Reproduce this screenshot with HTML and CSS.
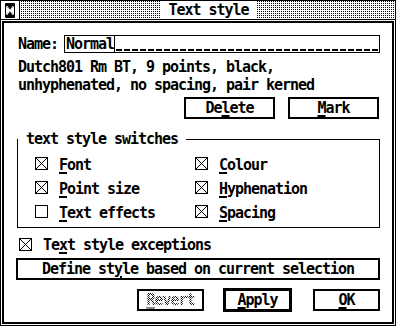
FILE: index.html
```html
<!DOCTYPE html>
<html lang="en">
<head>
  <meta charset="UTF-8">
  <title>Text style</title>
  <link rel="stylesheet" href="styles.css">
</head>
<body>
  <div class="window">
    <div class="titlebar">
      <div class="closer">
        <svg width="10" height="15" viewBox="0 0 10 15">
          <path d="M0.5 0.5h9v14h-9z" fill="none" stroke="#000"/>
          <path d="M1 1h8v2L5 7.5 1 3z M1 14h8v-2L5 7.5 1 12z" fill="#000"/>
          <path d="M2 3l6 9M8 3l-6 9" stroke="#fff" stroke-width="1"/>
        </svg>
      </div>
      <div class="mover"><span class="title">Text style</span></div>
    </div>

    <div class="dialog">
      <div class="name-row">
        <span class="label">Name:</span>
        <div class="field"><span class="typed">Normal</span><span class="blanks"></span></div>
      </div>

      <div class="summary">
        <div class="line">Dutch801 Rm BT, 9 points, black,</div>
        <div class="line">unhyphenated, no spacing, pair kerned</div>
      </div>

      <div class="actions top">
        <button class="btn wide">De<u>l</u>ete</button>
        <button class="btn wide"><u>M</u>ark</button>
      </div>

      <div class="group">
        <span class="legend">text style switches</span>
        <div class="switches">
          <div class="switch"><span class="check on"></span><u>F</u>ont</div>
          <div class="switch"><span class="check on"></span><u>C</u>olour</div>
          <div class="switch"><span class="check on"></span><u>P</u>oint size</div>
          <div class="switch"><span class="check on"></span><u>H</u>yphenation</div>
          <div class="switch"><span class="check"></span><u>T</u>ext effects</div>
          <div class="switch"><span class="check on"></span><u>S</u>pacing</div>
        </div>
      </div>

      <div class="switch exceptions"><span class="check on"></span>Te<u>x</u>t style exceptions</div>

      <button class="btn define">Define st<u>y</u>le based on current selection</button>

      <div class="actions bottom">
        <button class="btn small disabled"><u>R</u>evert</button>
        <button class="btn small default"><u>A</u>pply</button>
        <button class="btn small"><u>O</u>K</button>
      </div>
    </div>
  </div>
</body>
</html>
```

FILE: styles.css
```css
body {
  margin: 0;
  padding: 0;
  background: #fff;
  color: #000;
  font-family: "DejaVu Sans Mono", "Liberation Mono", monospace;
  font-weight: bold;
  font-size: 15px;
  letter-spacing: -1.03px;
  line-height: 16px;
}

.window {
  width: 396px;
  height: 326px;
  box-sizing: border-box;
  border: 1px solid #000;
}

/* title bar: close box + dotted mover */
.titlebar {
  display: flex;
  height: 18px;
  border-bottom: 1px solid #000;
}
.closer {
  width: 18px;
  border-right: 1px solid #000;
  display: flex;
  justify-content: center;
  align-items: center;
}
.mover {
  flex: 1;
  display: flex;
  justify-content: center;
  align-items: center;
  padding-left: 2px;
  background: conic-gradient(#000 25%, #fff 0) 0 0 / 2px 2px;
}
.title {
  background: #fff;
  padding: 0 8px;
  line-height: 18px;
}

.dialog {
  margin: 1px;
  height: 303px;
  box-sizing: border-box;
  border: 2px solid #000;
  padding: 12px 12px 0 12px;
  display: flex;
  flex-direction: column;
}

.name-row {
  display: flex;
  align-items: center;
  height: 18px;
  padding-left: 2px;
}
.name-row .label {
  width: 46px;
}
.field {
  flex: 1;
  display: flex;
  height: 18px;
  box-sizing: border-box;
  border: 1px solid #000;
  padding-left: 1px;
}
.field .typed {
  border-right: 1px solid #000;
}
.field .blanks {
  flex: 1;
  background: repeating-linear-gradient(90deg, transparent 0 1px, #000 1px 7px, transparent 7px 8px) 0 13px / 100% 2px no-repeat;
}

.summary {
  margin-top: 6px;
  padding-left: 2px;
  line-height: 17.5px;
}

u {
  text-decoration-thickness: 2px;
  text-underline-offset: 2px;
}

.actions {
  display: flex;
  justify-content: flex-end;
}
.actions.top {
  margin-top: 3px;
  gap: 13px;
  padding-right: 1px;
}
.actions.bottom {
  margin-top: 9px;
}

.btn {
  font: inherit;
  letter-spacing: inherit;
  color: #000;
  background: #fff;
  height: 22px;
  box-sizing: border-box;
  border: 2px solid #000;
  padding: 0;
  display: flex;
  justify-content: center;
  align-items: center;
}
.btn.wide {
  width: 91px;
}
.btn.small {
  width: 67px;
}
.btn.small + .btn.small {
  margin-left: 20px;
}
.btn.default {
  box-shadow: 0 0 0 1px #000;
}
.btn.default + .btn.small {
  margin-left: 22px;
}
.btn.disabled {
  color: transparent;
  background: conic-gradient(#000 25%, transparent 0 50%, #000 0 75%, transparent 0) 0 0 / 2px 2px;
  -webkit-background-clip: text;
  background-clip: text;
}
.btn.disabled u {
  text-decoration-color: #888;
}
.btn.define {
  margin-top: 5px;
  width: 100%;
}

.group {
  position: relative;
  margin: 20px 0 0 1px;
  border: 1px solid #000;
  padding: 17px 0 6px 17px;
}
.legend {
  position: absolute;
  top: -9px;
  left: 0;
  padding: 0 8px;
  background: #fff;
}
.switches {
  display: grid;
  grid-template-columns: 160px auto;
  row-gap: 8px;
}

.switch {
  display: flex;
  align-items: flex-start;
  height: 16px;
}
.switch.exceptions {
  margin-top: 9px;
  padding-left: 3px;
}
.check {
  width: 13px;
  height: 13px;
  box-sizing: border-box;
  border: 1px solid #000;
  margin-right: 11px;
  flex: none;
}
.exceptions .check {
  margin-top: 1px;
}
.check.on {
  background:
    linear-gradient(45deg, transparent calc(50% - 0.6px), #000 calc(50% - 0.6px) calc(50% + 0.6px), transparent calc(50% + 0.6px)),
    linear-gradient(-45deg, transparent calc(50% - 0.6px), #000 calc(50% - 0.6px) calc(50% + 0.6px), transparent calc(50% + 0.6px));
}
```
